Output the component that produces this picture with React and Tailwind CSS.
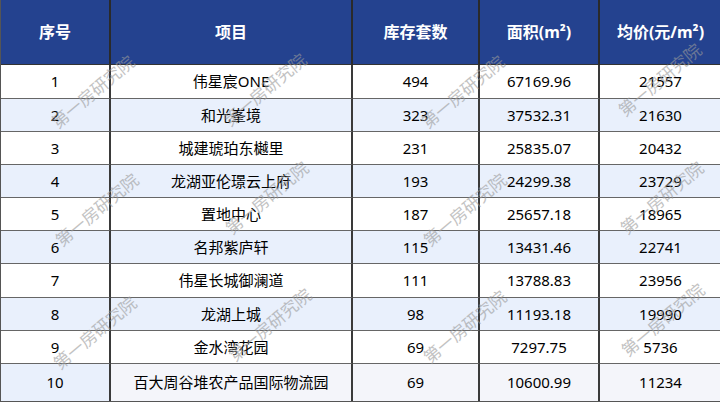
import React from "react";

const rows = [
  ["1", "伟星宸ONE", "494", "67169.96", "21557"],
  ["2", "和光峯境", "323", "37532.31", "21630"],
  ["3", "城建琥珀东樾里", "231", "25835.07", "20432"],
  ["4", "龙湖亚伦璟云上府", "193", "24299.38", "23729"],
  ["5", "置地中心", "187", "25657.18", "18965"],
  ["6", "名邦紫庐轩", "115", "13431.46", "22741"],
  ["7", "伟星长城御澜道", "111", "13788.83", "23956"],
  ["8", "龙湖上城", "98", "11193.18", "19990"],
  ["9", "金水湾花园", "69", "7297.75", "5736"],
  ["10", "百大周谷堆农产品国际物流园", "69", "10600.99", "11234"],
];

const heights = ["h-[34px]", "h-[33px]", "h-[33px]", "h-[33px]", "h-[33px]", "h-[33px]", "h-[34px]", "h-[33px]", "h-[33px]", "h-[37px]"];

const marks = [
  [93, 92], [265, 90], [463, 92], [660, 80],
  [97, 210], [267, 198], [465, 210], [662, 198],
  [95, 333], [270, 325], [465, 327], [663, 320],
];

export default function App() {
  return (
    <div className="relative w-[720px] h-[403px] bg-white overflow-hidden" style={{ fontFamily: "'Noto Sans', 'Noto Sans CJK SC', sans-serif" }}>
      <div className="grid grid-cols-[110px_242px_127px_120px_121px] border-l border-r border-b border-[#555]">
        {["序号", "项目", "库存套数", "面积(m²)", "均价(元/m²)"].map((h, i) => (
          <div
            key={h}
            className={`h-[65px] flex items-center justify-center bg-[#24428f] text-white font-bold text-[16px] border-b border-[#333] ${i < 4 ? "border-r-2 border-r-[#2a2a2a]" : ""}`}
          >
            {h}
          </div>
        ))}
        {rows.map((r, ri) =>
          r.map((c, ci) => {
            const even = ri % 2 === 1;
            let bg = even ? "bg-[#e9f0fc]" : "bg-white";
            if (ri === 9 && ci > 0) bg = "bg-[#f4f5fa]";
            return (
              <div
                key={ri + "-" + ci}
                className={`${heights[ri]} flex items-center justify-center text-[15px] text-black ${bg} ${ri < 9 ? "border-b border-[#666]" : ""} ${ci < 4 ? "border-r-2 border-r-[#3a3a3a]" : ""}`}
              >
                {c}
              </div>
            );
          })
        )}
      </div>
      {marks.map(([x, y], i) => (
        <div
          key={i}
          className="absolute pointer-events-none text-[17px] text-[#9a9a9a] opacity-60 whitespace-nowrap"
          style={{ left: x, top: y, transform: "translate(-50%, -50%) rotate(-40deg)" }}
        >
          第一房研究院
        </div>
      ))}
    </div>
  );
}
